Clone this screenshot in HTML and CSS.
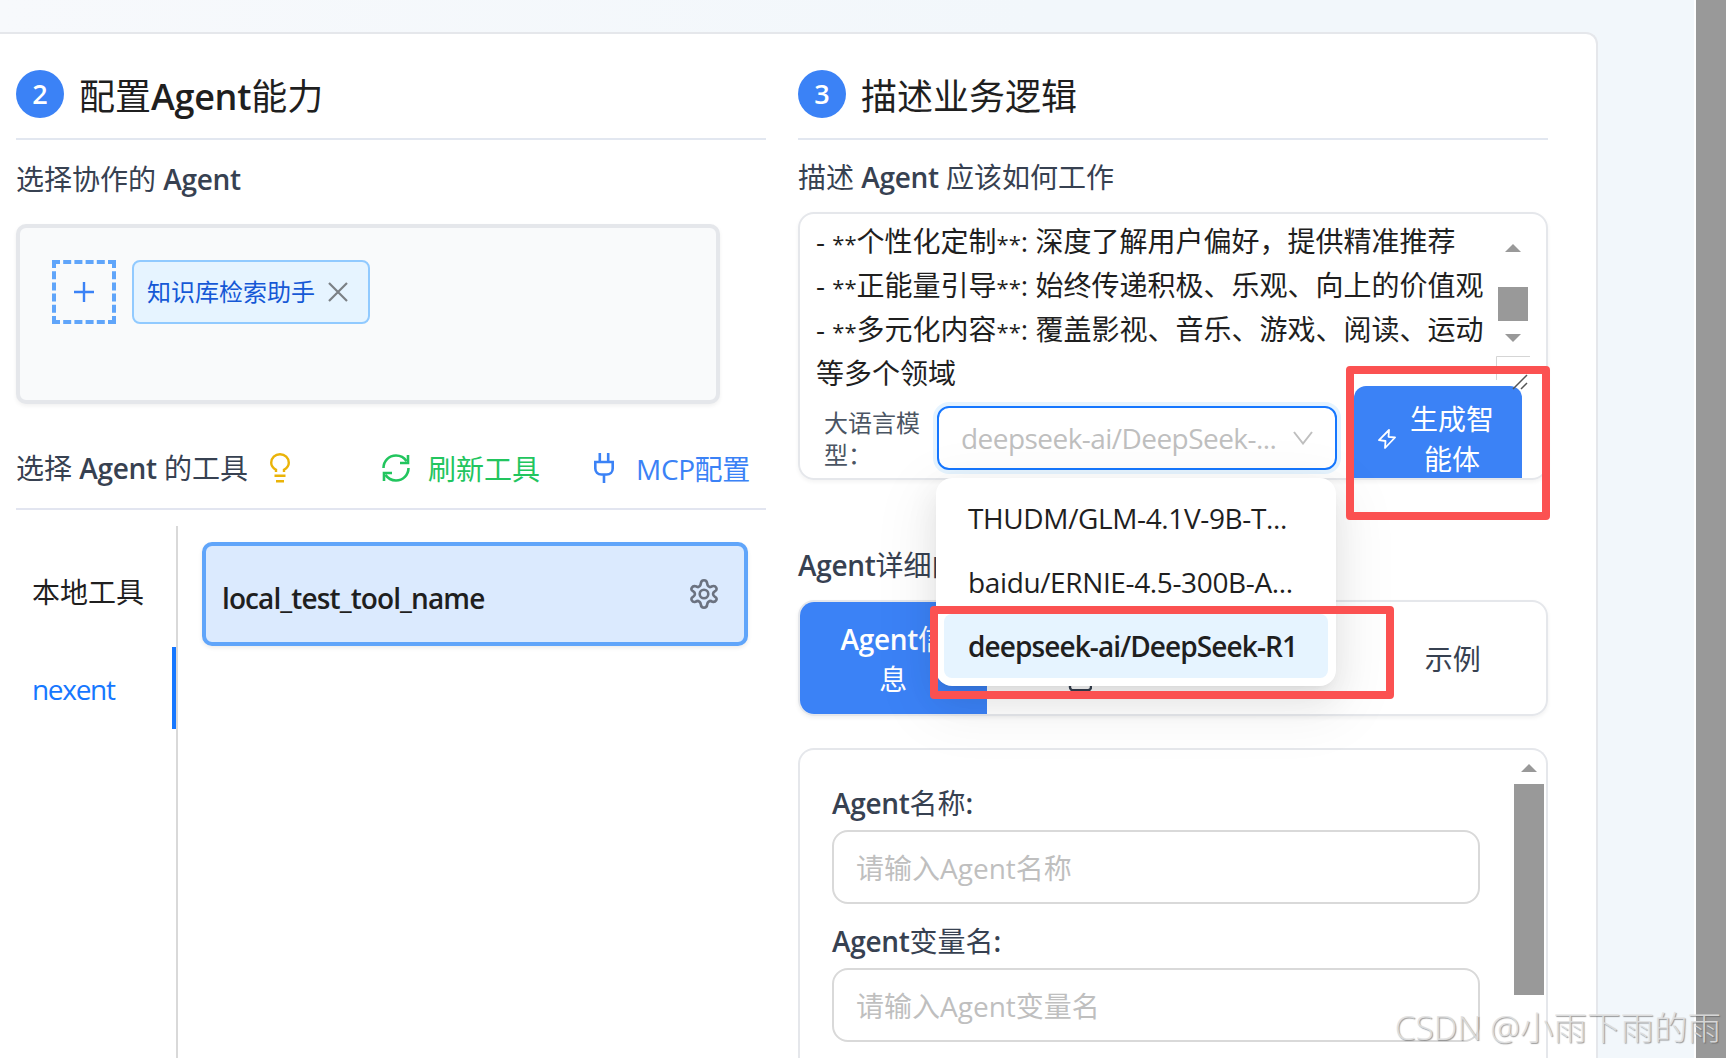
FILE: index.html
```html
<!DOCTYPE html>
<html lang="zh-CN">
<head>
    <meta charset="UTF-8">
    <meta name="viewport" content="width=device-width, initial-scale=1.0">
    <title>Agent 配置</title>
    <link rel="stylesheet" href="styles.css">
</head>
<body>

<main class="panel">
    <!-- Agent abilities -->
    <section class="column">
        <header class="step">
            <span class="step-number">2</span>
            <h2>配置<b>Agent</b>能力</h2>
        </header>
        <h3 class="agents-title">选择协作的 <b>Agent</b></h3>
        <div class="agent-box">
            <button class="add-agent">
                <svg width="24" height="24" viewBox="0 0 24 24"><path d="M12 2v20M2 12h20" stroke="#3b82f6" stroke-width="2.4"/></svg>
            </button>
            <span class="agent-tag">知识库检索助手
                <svg width="20" height="20" viewBox="0 0 20 20"><path d="M1 1l18 18M19 1L1 19" stroke="#7b8085" stroke-width="2.2"/></svg>
            </span>
        </div>

        <div class="tools-header">
            <h3>选择 <b>Agent</b> 的工具</h3>
            <svg class="bulb" width="20" height="30" viewBox="0 0 20 30" fill="none" stroke="#eab308" stroke-width="2.4">
                <path d="M6 19v-2.200C3.300 15.200 1.200 12.800 1.200 9.700a8.800 8.500 0 0 1 17.600 0c0 3.100-2.100 5.500-4.800 7.100V19"/>
                <path d="M4.500 22.800h11M6 28.300h8"/>
            </svg>
            <a class="refresh">
                <svg width="28" height="28" viewBox="0 0 28 28" fill="none" stroke="#22c55e" stroke-width="2.6">
                    <path d="M1.500 14C1.500 7 7 1.500 14 1.500c4.500 0 8.300 2.200 10.600 5.700M26.500 14c0 7-5.500 12.500-12.500 12.500-4.500 0-8.300-2.200-10.600-5.700"/>
                    <path d="M26 1v8h-8M2 27v-8h8"/>
                </svg>
                刷新工具
            </a>
            <a class="mcp">
                <svg width="20" height="30" viewBox="0 0 20 30" fill="none" stroke="#3b82f6" stroke-width="2.6">
                    <path d="M5.800 0v9M14.200 0v9M1.300 9h17.400v6.500c0 3.500-2.500 6-6 6H7.300c-3.500 0-6-2.500-6-6zM10 21.500V30"/>
                </svg>
                <span>MCP配置</span>
            </a>
        </div>

        <div class="tools">
            <ul class="tool-tabs">
                <li>本地工具</li>
                <li class="active">nexent</li>
            </ul>
            <div class="tool-card">
                <b>local_test_tool_name</b>
                <svg width="30" height="30" viewBox="0 0 30 30" fill="none" stroke="#6b7280" stroke-width="2.6" stroke-linejoin="round">
                    <path d="M11.800 4.500Q12.200 1.300 15 1.300T18.200 4.500Q18.400 7.300 20.800 8.100Q22.300 8 23.500 7.200Q26 6.500 27.200 8.700T26 12.200Q24 13.500 24 15T26 17.800Q28.500 19.200 27.200 21.300T23.500 22.800Q22.300 22 20.800 21.900Q18.400 22.700 18.200 25.500Q17.800 28.700 15 28.700T11.800 25.500Q11.600 22.700 9.200 21.900Q7.700 22 6.500 22.800Q4 23.500 2.800 21.300T4 17.800Q6 16.500 6 15T4 12.200Q1.500 10.800 2.800 8.700T6.500 7.200Q7.700 8 9.200 8.100Q11.600 7.300 11.800 4.500Z"/>
                    <circle cx="15" cy="15" r="4.300"/>
                </svg>
            </div>
        </div>
    </section>

    <!-- Business logic -->
    <section class="column">
        <header class="step">
            <span class="step-number">3</span>
            <h2>描述业务逻辑</h2>
        </header>
        <h3 class="logic-title">描述 <b>Agent</b> 应该如何工作</h3>
        <div class="logic-card">
            <div class="logic-text">
                <p>- <i>**</i>个性化定制<i>**</i>: 深度了解用户偏好，提供精准推荐</p>
                <p>- <i>**</i>正能量引导<i>**</i>: 始终传递积极、乐观、向上的价值观</p>
                <p>- <i>**</i>多元化内容<i>**</i>: 覆盖影视、音乐、游戏、阅读、运动</p>
                <p>等多个领域</p>
            </div>
            <svg class="text-scroll" width="36" height="150" viewBox="0 0 36 150">
                <path d="M17 10l8 8H9zM9 100h16l-8 8zM2 53h30v34H2z" fill="#999"/>
                <path d="M.500 146v-23.500H34" fill="none" stroke="#d5d5d5"/>
            </svg>
            <div class="model-row">
                <label>大语言模型：</label>
                <div class="select">
                    <span>deepseek-ai/DeepSeek-...</span>
                    <svg width="20" height="14" viewBox="0 0 20 14"><path d="M1 1l9 11.500L19 1" fill="none" stroke="#bfbfbf" stroke-width="2"/></svg>
                </div>
                <button class="generate">
                    <svg width="18" height="20" viewBox="0 0 18 20" fill="none" stroke="#fff" stroke-width="1.800" stroke-linejoin="round"><path d="M11 1L1 11.200l6.500.8L7 19l10-10.500-6.500-.700z"/></svg>
                    <span>生成智<br>能体</span>
                </button>
            </div>
            <svg class="resize-grip" width="16" height="16" viewBox="0 0 16 16"><path d="M1 15L15 1M9 15l6-6" stroke="#555" stroke-width="1.500"/></svg>
            <div class="dropdown">
                <div class="option">THUDM/GLM-4.1V-9B-T...</div>
                <div class="option">baidu/ERNIE-4.5-300B-A...</div>
                <div class="option selected">deepseek-ai/DeepSeek-R1</div>
            </div>
            <div class="mark mark-button"></div>
            <div class="mark mark-option"></div>
        </div>

        <h3 class="detail-title"><b>Agent</b>详细内容</h3>
        <div class="detail-tabs">
            <div class="detail-tab active"><span><b>Agent</b>信<br>息</span></div>
            <div class="detail-tab">
                <svg width="24" height="66" viewBox="0 0 24 66" fill="none" stroke="#374151" stroke-width="2.400"><rect x="2" y="38" width="21" height="26.300" rx="3"/></svg>
            </div>
            <div class="detail-tab"></div>
            <div class="detail-tab">示例</div>
        </div>

        <div class="detail-form">
            <label><b>Agent</b>名称<b>:</b></label>
            <input type="text" placeholder="请输入Agent名称">
            <label><b>Agent</b>变量名<b>:</b></label>
            <input type="text" placeholder="请输入Agent变量名">
            <svg class="form-scroll" width="30" height="232" viewBox="0 0 30 232"><path d="M15 0l8 8H7zM0 20h30v211H0z" fill="#999"/></svg>
        </div>
    </section>
</main>

<div class="page-scroll"></div>
<div class="watermark">CSDN @小雨下雨的雨</div>

</body>
</html>
```
FILE: styles.css
```css
* {
    box-sizing: border-box;
}

body {
    display: flex;
    justify-content: space-between;
    position: relative;
    width: 1726px;
    height: 1058px;
    margin: 0;
    overflow: hidden;
    background: linear-gradient(to right, #f7f9fc, #f2f7fb 60%);
    color: #1f1f1f;
    font-family: "Open Sans", "Noto Sans CJK SC", sans-serif;
    font-size: 28px;
}

h2, h3, p, ul {
    margin: 0;
    padding: 0;
    font-weight: 400;
}

b {
    font-weight: 600;
    letter-spacing: -0.3px;
}

svg {
    flex: none;
}

button {
    border: none;
    font-family: inherit;
}

.panel {
    display: flex;
    gap: 32px;
    width: 1598px;
    height: 1026px;
    margin-top: 32px;
    padding: 36px 48px 0 16px;
    background: #fff;
    border: 2px solid #e5e7eb;
    border-left: none;
    border-bottom: none;
    border-radius: 0 12px 0 0;
}

.column {
    display: flex;
    flex-direction: column;
    width: 750px;
    flex: none;
}

.step {
    display: flex;
    flex: none;
    gap: 15px;
    height: 70px;
    border-bottom: 2px solid #e2e7f0;
}

.step-number {
    width: 48px;
    height: 48px;
    border-radius: 50%;
    background: #3b82f6;
    color: #fff;
    font-size: 27px;
    font-weight: 600;
    line-height: 48px;
    text-align: center;
}

h2 {
    font-size: 36px;
    line-height: 54px;
}

h3 {
    color: #374151;
    font-size: 28px;
    line-height: 40px;
    white-space: nowrap;
}

.agents-title {
    margin: 19px 0 25px;
}

.agent-box {
    display: flex;
    gap: 16px;
    align-items: flex-start;
    width: 704px;
    height: 180px;
    padding: 32px;
    background: #f9fafb;
    border: 4px solid #e5e7eb;
    border-radius: 10px;
    box-shadow: 0 2px 4px rgba(0, 0, 0, 0.06);
}

.add-agent {
    display: flex;
    align-items: center;
    justify-content: center;
    width: 64px;
    height: 64px;
    padding: 0;
    background: none;
    border: 4px dashed #60a5fa;
}

.agent-tag {
    display: flex;
    align-items: center;
    gap: 13px;
    width: 238px;
    height: 64px;
    padding-left: 13px;
    background: #e6f4ff;
    border: 2px solid #91caff;
    border-radius: 8px;
    color: #1558d6;
    font-size: 24px;
    line-height: 36px;
}

.tools-header {
    display: flex;
    flex: none;
    align-items: center;
    height: 106px;
    padding-top: 24px;
    border-bottom: 2px solid #e2e5f0;
}

.bulb {
    margin-left: 22px;
}

.refresh, .mcp {
    display: flex;
    align-items: center;
    gap: 18px;
    color: #22c55e;
}

.refresh {
    margin-left: 92px;
}

.mcp {
    gap: 22px;
    margin-left: 54px;
    color: #3b82f6;
    letter-spacing: -0.4px;
}

.tools {
    display: flex;
    flex: 1;
    gap: 24px;
    align-items: flex-start;
    margin-top: 16px;
}

.tool-tabs {
    align-self: stretch;
    width: 162px;
    padding-top: 24px;
    border-right: 2px solid #d9d9d9;
    list-style: none;
}

.tool-tabs li {
    height: 82px;
    margin-bottom: 15px;
    padding-left: 16px;
    line-height: 84px;
}

.tool-tabs .active {
    border-right: 4px solid #1677ff;
    color: #1677ff;
    letter-spacing: -1.3px;
}

.tool-card {
    display: flex;
    align-items: center;
    justify-content: space-between;
    width: 546px;
    height: 104px;
    margin-top: 16px;
    padding: 0 25px 0 16px;
    background: #dbeafe;
    border: 4px solid #60a5fa;
    border-radius: 10px;
    box-shadow: 0 2px 4px rgba(0, 0, 0, 0.08);
}

.tool-card b {
    padding-top: 7px;
    letter-spacing: -0.9px;
}

.logic-title {
    margin: 17px 0 15px;
}

.logic-card {
    position: relative;
    flex: none;
    height: 268px;
    padding-top: 2px;
    border: 2px solid #e5e7eb;
    border-radius: 16px;
    box-shadow: 0 2px 4px rgba(0, 0, 0, 0.05);
}

.logic-text {
    height: 178px;
    padding-left: 16px;
    white-space: nowrap;
}

.logic-text p {
    height: 44px;
    line-height: 51px;
}

.logic-text i {
    font-size: 22px;
    font-style: normal;
    line-height: 1;
}

.text-scroll {
    position: absolute;
    left: 696px;
    top: 20px;
}

.resize-grip {
    position: absolute;
    left: 712px;
    top: 160px;
}

.model-row {
    display: flex;
    height: 84px;
    padding-left: 24px;
}

.model-row label {
    width: 96px;
    margin-top: 13px;
    color: #4b5563;
    font-size: 24px;
    line-height: 32px;
}

.select {
    display: flex;
    align-items: center;
    justify-content: space-between;
    width: 400px;
    height: 64px;
    margin: 12px 17px 0;
    padding: 0 22px;
    border: 2px solid #1677ff;
    border-radius: 12px;
    box-shadow: 0 0 0 4px rgba(5, 145, 255, 0.1);
    color: #bfbfbf;
    letter-spacing: -0.55px;
    white-space: nowrap;
}

.generate {
    display: flex;
    align-items: center;
    gap: 14px;
    width: 168px;
    height: 92px;
    margin-top: -8px;
    padding: 13px 0 0 24px;
    background: #3b82f6;
    border-radius: 12px 12px 0 0;
    color: #fff;
    font-size: 28px;
    line-height: 40px;
}

.dropdown {
    position: absolute;
    z-index: 2;
    left: 136px;
    top: 264px;
    width: 400px;
    padding: 8px;
    background: #fff;
    border-radius: 16px;
    box-shadow: 0 12px 32px rgba(0, 0, 0, 0.08), 0 6px 12px -8px rgba(0, 0, 0, 0.12), 0 18px 56px 16px rgba(0, 0, 0, 0.05);
}

.option {
    height: 64px;
    padding-left: 24px;
    line-height: 64px;
    letter-spacing: -0.37px;
    white-space: nowrap;
}

.option.selected {
    background: #e6f4ff;
    border-radius: 8px;
    font-weight: 600;
    line-height: 65px;
    letter-spacing: -0.9px;
}

/* red highlight frames */
.mark {
    position: absolute;
    z-index: 3;
    border: 8px solid #fb5151;
    border-radius: 4px;
}

.mark-button {
    left: 546px;
    top: 152px;
    width: 204px;
    height: 154px;
}

.mark-option {
    left: 130px;
    top: 392px;
    width: 464px;
    height: 93px;
}

.detail-title {
    margin: 65px 0 15px;
}

.detail-tabs {
    display: grid;
    flex: none;
    grid-template-columns: repeat(4, 1fr);
    height: 116px;
    border: 2px solid #e5e7eb;
    border-radius: 16px;
    box-shadow: 0 2px 4px rgba(0, 0, 0, 0.06);
    overflow: hidden;
    color: #374151;
}

.detail-tab {
    display: flex;
    align-items: center;
    justify-content: center;
    padding-top: 2px;
    line-height: 40px;
    text-align: center;
}

.detail-tab.active {
    background: #3b82f6;
    color: #fff;
}

.detail-form {
    position: relative;
    flex: 1;
    margin-top: 32px;
    padding: 32px 32px 0;
    border: 2px solid #e5e7eb;
    border-bottom: none;
    border-radius: 16px 16px 0 0;
}

.detail-form label {
    display: block;
    height: 48px;
    color: #374151;
    line-height: 42px;
}

.detail-form input {
    display: block;
    width: 648px;
    height: 74px;
    margin-bottom: 16px;
    padding: 1px 22px 0;
    border: 2px solid #d9d9d9;
    border-radius: 16px;
    font-family: inherit;
    font-size: 28px;
}

.detail-form input::placeholder {
    color: #bfbfbf;
}

.form-scroll {
    position: absolute;
    left: 714px;
    top: 14px;
}

.page-scroll {
    width: 32px;
    background: #999;
    border-left: 2px solid #fff;
}

.watermark {
    position: absolute;
    z-index: 4;
    right: 5px;
    bottom: 7px;
    color: rgba(225, 225, 225, 0.9);
    font-size: 33.5px;
    font-weight: 300;
    line-height: 48px;
    text-shadow: 1px 1px 1px rgba(90, 90, 90, 0.6);
    white-space: nowrap;
}
```
